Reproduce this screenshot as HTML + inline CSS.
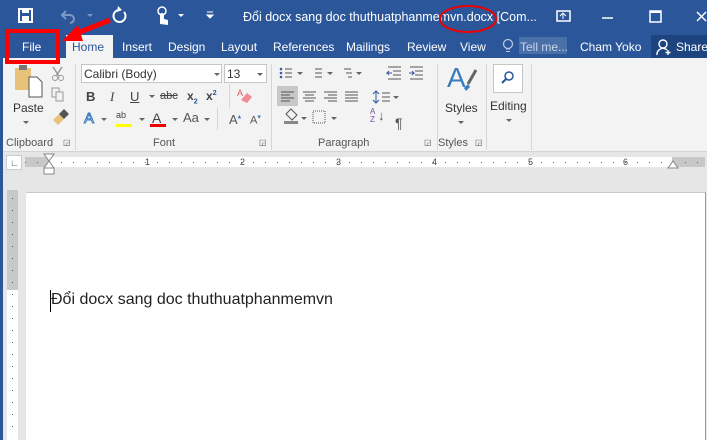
<!DOCTYPE html><html><head><meta charset="utf-8"><style>
*{margin:0;padding:0;box-sizing:border-box}
body{width:707px;height:440px;overflow:hidden;position:relative;background:#e6e6e6;font-family:"Liberation Sans",sans-serif;}
.a{position:absolute;white-space:nowrap}
.tb{color:#fff;font-size:12px}
.rt{font-size:12px;color:#333}
.gl{font-size:11px;color:#555}
.sep{position:absolute;width:1px;background:#d6d6d6}
.dd{position:absolute;width:0;height:0;border-left:3px solid transparent;border-right:3px solid transparent;border-top:3px solid #666}
</style></head><body>
<div class="a" style="left:0;top:0;width:707px;height:58px;background:#2b579a"></div>
<div class="a" style="left:0;top:0;width:3px;height:440px;background:#2b579a"></div>
<svg class="a" style="left:0;top:0" width="707" height="60">
<rect x="19" y="9" width="13" height="13" fill="none" stroke="#fff" stroke-width="2"/><rect x="22" y="9" width="7" height="4" fill="#fff"/><rect x="22" y="16" width="7" height="5" fill="#fff"/>
<path d="M66 11 l-4 4 4 4 M62 15 h8 a4 4 0 0 1 0 8" fill="none" stroke="#7e96c4" stroke-width="2"/>
<path d="M87 14 l3 3 3-3z" fill="#7e96c4"/>
<path d="M124 12 a6 6 0 1 1 -5 -2" fill="none" stroke="#fff" stroke-width="2"/><path d="M118 6 l4 4 -5 2z" fill="#fff"/>
<path d="M160 24 v-9 a2 2 0 0 1 4 0 v4 l4 1 v5 z" fill="#fff"/><circle cx="162" cy="11" r="4" fill="none" stroke="#fff" stroke-width="1.5"/>
<path d="M178 14 l3 3 3-3z" fill="#fff"/>
<path d="M207 12 h6 M207 15 l3 3 3-3z" stroke="#fff" fill="#fff"/>
<rect x="557" y="11" width="13" height="10" fill="none" stroke="#fff" stroke-width="1.5"/><path d="M563 19 v-5 M560 16 l3-3 3 3" stroke="#fff" fill="none"/>
<path d="M602 18 h11" stroke="#fff" stroke-width="1.5"/>
<rect x="650" y="11" width="11" height="11" fill="none" stroke="#fff" stroke-width="1.5"/><rect x="650" y="11" width="11" height="2" fill="#fff"/>
<path d="M697 12 l9 9 M706 12 l-9 9" stroke="#fff" stroke-width="1.5"/>
</svg>
<div class="a tb" style="left:243px;top:10px;font-size:12.5px">Đổi docx sang doc thuthuatphanmemvn.docx [Com...</div>
<div class="a" style="left:66px;top:35px;width:47px;height:24px;background:#f3f3f3"></div>
<div class="a tb" style="left:22px;top:40px">File</div>
<div class="a tb" style="left:72px;top:40px;color:#2b579a">Home</div>
<div class="a tb" style="left:122px;top:40px">Insert</div>
<div class="a tb" style="left:168px;top:40px">Design</div>
<div class="a tb" style="left:221px;top:40px">Layout</div>
<div class="a tb" style="left:273px;top:40px">References</div>
<div class="a tb" style="left:346px;top:40px">Mailings</div>
<div class="a tb" style="left:407px;top:40px">Review</div>
<div class="a tb" style="left:460px;top:40px">View</div>
<svg class="a" style="left:502px;top:38px" width="12" height="16"><circle cx="6" cy="6" r="4.5" fill="none" stroke="#b8c6e0" stroke-width="1.3"/><path d="M4 11 h4 M4 13.5 h4" stroke="#b8c6e0"/></svg>
<div class="a" style="left:519px;top:37px;width:48px;height:17px;background:#4a70aa"></div>
<div class="a tb" style="left:520px;top:40px;color:#c9d4e8">Tell me...</div>
<div class="a tb" style="left:580px;top:40px">Cham Yoko</div>
<div class="a" style="left:651px;top:35px;width:56px;height:24px;background:#1e4480"></div>
<svg class="a" style="left:656px;top:38px" width="16" height="18"><circle cx="7" cy="6" r="4" fill="none" stroke="#fff" stroke-width="1.4"/><path d="M1 17 a6 6 0 0 1 10 -5 M12 12 v5 M9.5 14.5 h5" fill="none" stroke="#fff" stroke-width="1.4"/></svg>
<div class="a tb" style="left:676px;top:40px">Share</div>
<div class="a" style="left:3px;top:58px;width:704px;height:94px;background:#f3f3f3;border-bottom:1px solid #d4d4d4"></div>
<div class="sep" style="left:75px;top:64px;height:86px"></div>
<div class="sep" style="left:271px;top:64px;height:86px"></div>
<div class="sep" style="left:437px;top:64px;height:86px"></div>
<div class="sep" style="left:486px;top:64px;height:86px"></div>
<div class="sep" style="left:531px;top:64px;height:86px"></div>
<svg class="a" style="left:12px;top:65px" width="60" height="60">
<rect x="3" y="3" width="16" height="22" rx="1" fill="#e8c27a"/><rect x="7" y="0" width="8" height="5" fill="#777"/>
<path d="M17 12 h8 l5 5 v15 h-13z" fill="#fff" stroke="#555"/>
<path d="M41 2 l6 9 M50 2 l-6 9" stroke="#999" stroke-width="1.5"/><circle cx="43" cy="13" r="2.5" fill="none" stroke="#999"/><circle cx="49" cy="13" r="2.5" fill="none" stroke="#999"/>
<rect x="40" y="23" width="7" height="9" fill="none" stroke="#999"/><rect x="44" y="27" width="7" height="9" fill="#f3f3f3" stroke="#999"/>
<path d="M41 55 l6-6 5 5 -6 6z" fill="#e8c27a"/><path d="M47 49 l5-5 5 5 -5 5z" fill="#555"/>
</svg>
<div class="a rt" style="left:13px;top:101px">Paste</div>
<div class="dd" style="left:23px;top:121px"></div>
<div class="a gl" style="left:6px;top:137px">Clipboard</div>
<div class="a gl" style="left:63px;top:138px;font-size:8px">◲</div>
<div class="a" style="left:81px;top:64px;width:141px;height:19px;background:#fff;border:1px solid #c6c6c6"></div>
<div class="a rt" style="left:84px;top:67px">Calibri (Body)</div>
<div class="dd" style="left:214px;top:73px"></div>
<div class="a" style="left:224px;top:64px;width:43px;height:19px;background:#fff;border:1px solid #c6c6c6"></div>
<div class="a rt" style="left:227px;top:67px">13</div>
<div class="dd" style="left:257px;top:73px"></div>
<div class="a" style="left:86px;top:89px;font-size:13px;font-weight:bold;color:#444">B</div>
<div class="a" style="left:110px;top:89px;font-size:13px;font-style:italic;color:#444;font-family:'Liberation Serif',serif">I</div>
<div class="a" style="left:130px;top:89px;font-size:13px;text-decoration:underline;color:#444">U</div>
<div class="dd" style="left:149px;top:95px"></div>
<div class="a" style="left:160px;top:90px;font-size:11px;text-decoration:line-through;color:#444">abc</div>
<div class="a" style="left:187px;top:89px;font-size:12px;font-weight:bold;color:#444">x<sub style="font-size:7px;color:#2b579a">2</sub></div>
<div class="a" style="left:206px;top:89px;font-size:12px;font-weight:bold;color:#444">x<sup style="font-size:7px;color:#2b579a">2</sup></div>
<div class="a" style="left:229px;top:84px;width:1px;height:24px;background:#d6d6d6"></div>
<svg class="a" style="left:235px;top:85px" width="20" height="20"><text x="2" y="11" font-size="9" fill="#d55" font-family="Liberation Sans">A</text><path d="M6 15 l6-7 5 4 -5 6z" fill="#f08a96"/></svg>
<div class="a" style="left:84px;top:110px;font-size:15px;color:#fff;-webkit-text-stroke:1px #3b7bc0">A</div>
<div class="dd" style="left:101px;top:118px"></div>
<div class="a" style="left:116px;top:110px;font-size:9px;color:#444">ab</div>
<div class="a" style="left:116px;top:124px;width:16px;height:3px;background:#ff0"></div>
<div class="dd" style="left:139px;top:118px"></div>
<div class="a" style="left:152px;top:110px;font-size:14px;color:#444">A</div>
<div class="a" style="left:150px;top:124px;width:16px;height:3px;background:#e00"></div>
<div class="dd" style="left:172px;top:118px"></div>
<div class="a" style="left:183px;top:110px;font-size:13px;color:#555">Aa</div>
<div class="dd" style="left:204px;top:118px"></div>
<div class="a" style="left:217px;top:108px;width:1px;height:22px;background:#d6d6d6"></div>
<div class="a" style="left:229px;top:112px;font-size:13px;color:#555">A<sup style="font-size:7px;color:#3b7bc0">▴</sup></div>
<div class="a" style="left:250px;top:113px;font-size:11px;color:#555">A<sup style="font-size:7px;color:#3b7bc0">▾</sup></div>
<div class="a gl" style="left:153px;top:137px">Font</div>
<div class="a gl" style="left:259px;top:138px;font-size:8px">◲</div>
<svg class="a" style="left:276px;top:62px" width="160" height="70" fill="none" stroke="#555">
<g stroke="#2b579a"><circle cx="5" cy="7" r=".8"/><circle cx="5" cy="11" r=".8"/><circle cx="5" cy="15" r=".8"/></g>
<path d="M9 7h7M9 11h7M9 15h7"/><path d="M21 10l3 3 3-3z" fill="#666" stroke="none"/>
<path d="M39 7h7M39 11h7M39 15h7"/><path d="M51 10l3 3 3-3z" fill="#666" stroke="none"/>
<path d="M68 7h7M70 11h6M72 15h4"/><path d="M80 10l3 3 3-3z" fill="#666" stroke="none"/>
<path d="M112 5h13M117 9h8M117 13h8M112 17h13" /><path d="M116 11h-5l2-2m-2 2l2 2" stroke="#2b579a"/>
<path d="M134 5h13M139 9h8M139 13h8M134 17h13"/><path d="M133 11h5l-2-2m2 2l-2 2" stroke="#2b579a"/>
<rect x="1" y="24" width="21" height="20" fill="#c8c8c8" stroke="none"/>
<path d="M5 30h13M5 33h9M5 36h13M5 39h9"/>
<path d="M27 30h13M29 33h9M27 36h13M29 39h9"/>
<path d="M48 30h13M52 33h9M48 36h13M52 39h9"/>
<path d="M69 30h13M69 33h13M69 36h13M69 39h13"/>
<path d="M100 29v12M97 32l3-3 3 3M97 38l3 3 3-3" stroke="#2b579a"/><path d="M106 31h8M106 35h8M106 39h8"/><path d="M117 34l3 3 3-3z" fill="#666" stroke="none"/>
<path d="M10 52 l5-5 6 6 -5 5z"/><rect x="8" y="59" width="14" height="3" fill="#888" stroke="none"/><path d="M25 55l3 3 3-3z" fill="#666" stroke="none"/>
<rect x="37" y="49" width="12" height="12" stroke-dasharray="1 1"/><path d="M55 55l3 3 3-3z" fill="#666" stroke="none"/>
<text x="119" y="66" font-size="14" fill="#555" stroke="none" font-family="Liberation Sans">¶</text>
</svg>
<div class="a" style="left:370px;top:108px;font-size:8px;color:#7a4ea0;line-height:8px">A<br>Z</div>
<div class="a" style="left:378px;top:108px;font-size:13px;color:#555">↓</div>
<div class="a gl" style="left:318px;top:137px">Paragraph</div>
<div class="a gl" style="left:424px;top:138px;font-size:8px">◲</div>
<div class="a" style="left:447px;top:62px;font-size:28px;color:#3b7bc0">A</div>
<svg class="a" style="left:460px;top:68px" width="20" height="30"><path d="M16 2 l-8 14" stroke="#666" stroke-width="3"/><path d="M8 16 l-4 4 2 3 4-4z" fill="#3b7bc0"/></svg>
<div class="a rt" style="left:445px;top:101px">Styles</div>
<div class="dd" style="left:458px;top:121px"></div>
<div class="a gl" style="left:438px;top:137px">Styles</div>
<div class="a gl" style="left:475px;top:138px;font-size:8px">◲</div>
<div class="a" style="left:493px;top:64px;width:30px;height:29px;background:#fff;border:1px solid #c6c6c6"></div>
<svg class="a" style="left:500px;top:70px" width="16" height="16"><circle cx="9" cy="6" r="4" fill="none" stroke="#2b579a" stroke-width="1.5"/><path d="M6 9l-4 4" stroke="#2b579a" stroke-width="2"/></svg>
<div class="a rt" style="left:490px;top:99px">Editing</div>
<div class="dd" style="left:506px;top:119px"></div>
<div class="a" style="left:6px;top:155px;width:16px;height:15px;background:#fff;border:1px solid #ccc"></div>
<div class="a" style="left:10px;top:158px;font-size:9px;color:#444;font-weight:bold">∟</div>
<div class="a" style="left:25px;top:157px;width:680px;height:10px;background:#c8c8c8"></div>
<div class="a" style="left:49px;top:157px;width:623px;height:10px;background:#fff"></div>
<div class="a" style="left:25px;top:157px;width:680px;height:10px;font-size:9px;color:#444;line-height:10px">
<span class="a" style="left:120px;top:0">1</span><span class="a" style="left:215px;top:0">2</span><span class="a" style="left:311px;top:0">3</span><span class="a" style="left:407px;top:0">4</span><span class="a" style="left:503px;top:0">5</span><span class="a" style="left:598px;top:0">6</span></div>
<div class="a" style="left:25px;top:162px;width:680px;height:1px;background-image:repeating-linear-gradient(90deg,#666 0 1px,transparent 1px 12px)"></div>
<svg class="a" style="left:43px;top:153px" width="12" height="22"><path d="M1 1h10l-5 7z M1 15h10l-5-7z" fill="#fff" stroke="#888"/><rect x="1" y="15" width="10" height="6" fill="#fff" stroke="#888"/></svg>
<svg class="a" style="left:667px;top:158px" width="12" height="12"><path d="M1 10h10l-5-7z" fill="#fff" stroke="#888"/></svg>
<div class="a" style="left:7px;top:190px;width:11px;height:250px;background:#c8c8c8"></div>
<div class="a" style="left:7px;top:290px;width:11px;height:150px;background:#fff"></div>
<div class="a" style="left:12px;top:198px;width:1px;height:240px;background-image:repeating-linear-gradient(180deg,#555 0 1px,transparent 1px 12px)"></div>
<div class="a" style="left:18px;top:190px;width:8px;height:250px;background:#e6e6e6"></div>
<div class="a" style="left:26px;top:192px;width:680px;height:248px;background:#fff;border-top:1px solid #c8c8c8;border-right:1px solid #999"></div>
<div class="a" style="left:50px;top:290px;width:1px;height:22px;background:#000"></div>
<div class="a" style="left:51px;top:291px;font-size:16px;color:#222">Đổi docx sang doc thuthuatphanmemvn</div>
<svg class="a" style="left:0;top:0" width="707" height="80">
<rect x="7" y="31" width="51" height="31" fill="none" stroke="#f00" stroke-width="4"/>
<path d="M110 20 L75 34" stroke="#f00" stroke-width="5"/><path d="M62 41 L78 25 L83 41z" fill="#f00"/>
<ellipse cx="468" cy="19" rx="28" ry="13" fill="none" stroke="#e00" stroke-width="2"/>
</svg>
</body></html>
